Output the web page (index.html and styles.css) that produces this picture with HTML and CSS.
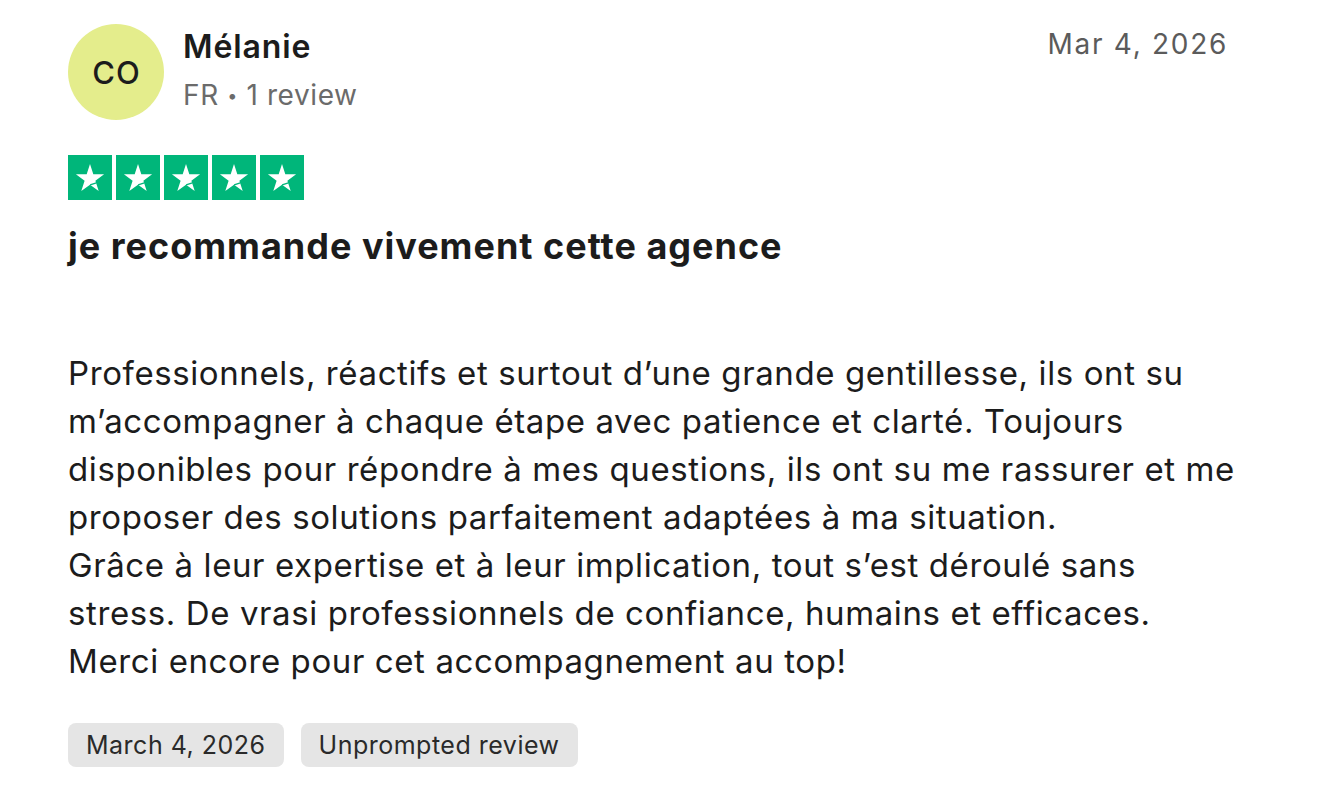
FILE: index.html
```html
<!DOCTYPE html>
<html lang="fr">
<head>
<meta charset="utf-8">
<link rel="stylesheet" href="styles.css">
</head>
<body>
<article class="review">
  <header class="head">
    <div class="consumer">
      <div class="avatar">CO</div>
      <div class="info">
        <div class="name">Mélanie</div>
        <div class="meta">FR <span class="dot">•</span> 1 review</div>
      </div>
    </div>
    <time class="date">Mar 4, 2026</time>
  </header>
  <div class="stars">
    <span class="star"><svg viewBox="0 0 24 24"><path d="M12 3.2l2.1 6.5h6.8l-5.5 4 2.1 6.5-5.5-4-5.5 4 2.1-6.5-5.5-4h6.8z" fill="#fff"/><path d="M12.1 16.3l3.9-1.2" stroke="#00b67a" stroke-width="0.9"/></svg></span>
    <span class="star"><svg viewBox="0 0 24 24"><path d="M12 3.2l2.1 6.5h6.8l-5.5 4 2.1 6.5-5.5-4-5.5 4 2.1-6.5-5.5-4h6.8z" fill="#fff"/><path d="M12.1 16.3l3.9-1.2" stroke="#00b67a" stroke-width="0.9"/></svg></span>
    <span class="star"><svg viewBox="0 0 24 24"><path d="M12 3.2l2.1 6.5h6.8l-5.5 4 2.1 6.5-5.5-4-5.5 4 2.1-6.5-5.5-4h6.8z" fill="#fff"/><path d="M12.1 16.3l3.9-1.2" stroke="#00b67a" stroke-width="0.9"/></svg></span>
    <span class="star"><svg viewBox="0 0 24 24"><path d="M12 3.2l2.1 6.5h6.8l-5.5 4 2.1 6.5-5.5-4-5.5 4 2.1-6.5-5.5-4h6.8z" fill="#fff"/><path d="M12.1 16.3l3.9-1.2" stroke="#00b67a" stroke-width="0.9"/></svg></span>
    <span class="star"><svg viewBox="0 0 24 24"><path d="M12 3.2l2.1 6.5h6.8l-5.5 4 2.1 6.5-5.5-4-5.5 4 2.1-6.5-5.5-4h6.8z" fill="#fff"/><path d="M12.1 16.3l3.9-1.2" stroke="#00b67a" stroke-width="0.9"/></svg></span>
  </div>
  <h2 class="title">je recommande vivement cette agence</h2>
  <p class="body">Professionnels, réactifs et surtout d’une grande gentillesse, ils ont su m’accompagner à chaque étape avec patience et clarté. Toujours disponibles pour répondre à mes questions, ils ont su me rassurer et me proposer des solutions parfaitement adaptées à ma situation.<br>Grâce à leur expertise et à leur implication, tout s’est déroulé sans stress. De vrasi professionnels de confiance, humains et efficaces.<br>Merci encore pour cet accompagnement au top!</p>
  <div class="tags">
    <span class="tag">March 4, 2026</span>
    <span class="tag">Unprompted review</span>
  </div>
</article>
</body>
</html>
```
FILE: styles.css
```css
html, body {
  margin: 0;
  background: #fff;
}
body {
  font-family: Inter, "Noto Sans", sans-serif;
  color: #1c1c1c;
}
.review {
  width: 1160px;
  padding: 24px 0 0 68px;
}
.head {
  display: flex;
  justify-content: space-between;
  align-items: flex-start;
}
.consumer {
  display: flex;
  align-items: center;
  gap: 19px;
}
.avatar {
  width: 96px;
  height: 96px;
  border-radius: 50%;
  background: #e4ed8c;
  display: flex;
  align-items: center;
  justify-content: center;
  box-sizing: border-box;
  padding-left: 1px;
  font-size: 31px;
  font-weight: 500;
  letter-spacing: 1px;
  color: #1c1c1c;
}
.info {
  display: flex;
  flex-direction: column;
  gap: 10px;
  margin-top: -4px;
}
.name {
  font-size: 32px;
  font-weight: 600;
  line-height: 40px;
  letter-spacing: 0.9px;
}
.meta {
  font-size: 28px;
  line-height: 36px;
  letter-spacing: 0.6px;
  color: #6b6b6b;
}
.dot {
  font-size: 18px;
  vertical-align: 3px;
}
.date {
  font-size: 28px;
  line-height: 40px;
  letter-spacing: 1.7px;
  color: #5b5b5b;
}
.stars {
  display: flex;
  gap: 4px;
  margin-top: 35px;
}
.star {
  width: 44px;
  height: 45px;
  background: #00b67a;
  display: flex;
  align-items: center;
  justify-content: center;
}
.star svg {
  width: 38px;
  height: 38px;
}
.title {
  margin: 21px 0 0;
  font-size: 36px;
  font-weight: 700;
  line-height: 50px;
  letter-spacing: 1px;
  color: #1c1c1c;
}
.body {
  width: 1170px;
  margin: 78px 0 0;
  font-size: 33px;
  line-height: 48px;
  letter-spacing: 0.6px;
  color: #1c1c1c;
}
.tags {
  display: flex;
  gap: 17px;
  margin-top: 38px;
}
.tag {
  background: #e5e5e5;
  border-radius: 8px;
  padding: 0 18px;
  height: 44px;
  display: flex;
  align-items: center;
  font-size: 25px;
  letter-spacing: 0.5px;
  color: #2a2a2a;
}
```
